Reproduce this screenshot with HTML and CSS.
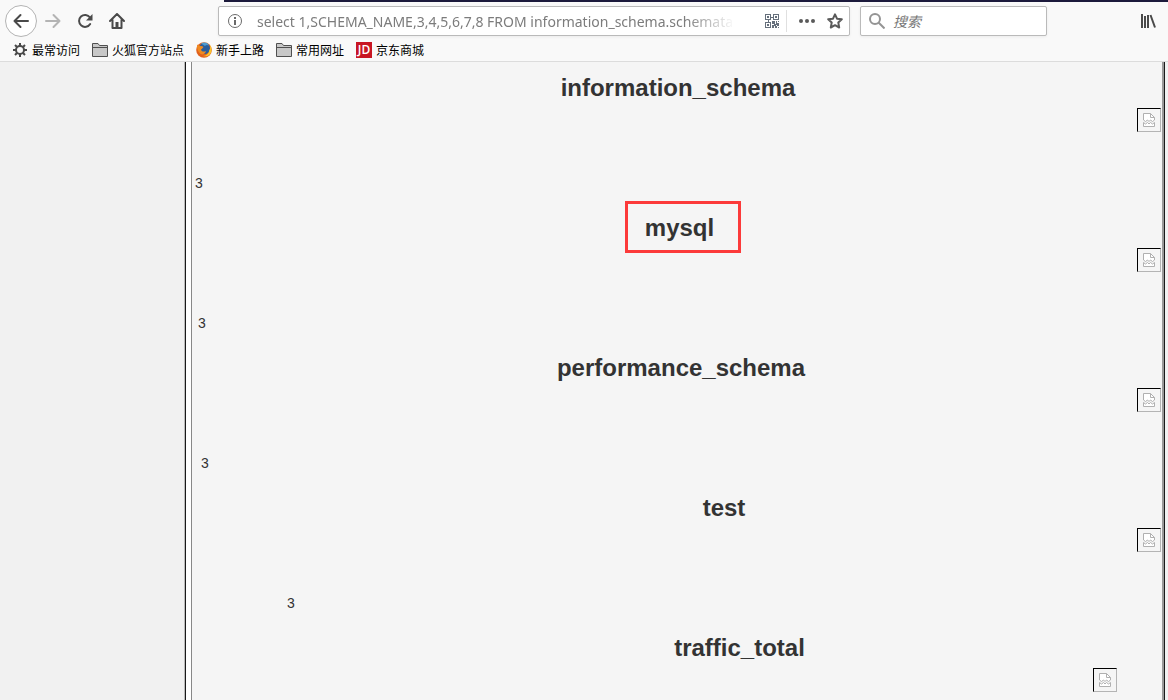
FILE: index.html
```html
<!DOCTYPE html>
<html lang="zh-CN">
<head>
    <meta charset="UTF-8">
    <meta name="viewport" content="width=device-width, initial-scale=1.0">
    <title>information_schema</title>
    <link rel="stylesheet" href="styles.css">
</head>
<body>
    <!-- Shared icons -->
    <svg class="symbols" aria-hidden="true">
        <symbol id="folder" viewBox="0 0 16 14">
            <path d="M.5 13.500V.5H6l1.500 2h8v11z" fill="#c8c8c8" stroke="#505050"/>
            <path d="M1 4.500h14" stroke="#505050"/>
        </symbol>
        <symbol id="broken" viewBox="0 0 14 16">
            <path d="M1.500 8V1.500h7l4 4V8l-2 1.500L8.500 8 7 9.500 5.500 8l-2 1.500zM1.500 10.500l2 1.500 2-1.500L7 12l1.500-1.500 2 1.500 2-1.500v4h-11z" fill="#fff" stroke="#b0b0b0"/>
            <path d="M8.500 1.500v4h4" fill="none" stroke="#b0b0b0"/>
        </symbol>
    </svg>

    <!-- Browser toolbar -->
    <header class="browser">
        <div class="tab-line"></div>
        <div class="toolbar">
            <div class="nav-buttons">
                <button class="back" aria-label="后退">
                    <svg width="16" height="16" viewBox="0 0 16 16"><path d="M15 8H1.500M7.500 2l-6 6 6 6" fill="none" stroke="#4a4a4a" stroke-width="2" stroke-linecap="round" stroke-linejoin="round"/></svg>
                </button>
                <button aria-label="前进" disabled>
                    <svg width="16" height="16" viewBox="0 0 16 16"><path d="M1 8h13.500M8.500 2l6 6-6 6" fill="none" stroke="#b4b4b4" stroke-width="2" stroke-linecap="round" stroke-linejoin="round"/></svg>
                </button>
                <button aria-label="刷新">
                    <svg width="16" height="16" viewBox="0 0 16 16"><path d="M13 4.500A6 6 0 1 0 13.200 11" fill="none" stroke="#4a4a4a" stroke-width="2" stroke-linecap="round"/><path d="M15.500 1v6.500H9z" fill="#4a4a4a"/></svg>
                </button>
                <button aria-label="主页">
                    <svg width="16" height="16" viewBox="0 0 16 16"><path d="M1 8l7-7 7 7M3.500 7v8h9V7" fill="none" stroke="#4a4a4a" stroke-width="2" stroke-linecap="round" stroke-linejoin="round"/><path d="M6.500 15V9h3v6z" fill="#4a4a4a"/></svg>
                </button>
            </div>
            <div class="url-bar">
                <svg width="16" height="16" viewBox="0 0 16 16"><circle cx="8" cy="8" r="6.500" fill="none" stroke="#6a6a6a"/><path d="M7 7h2v5H7zM7 4h2v2H7z" fill="#6a6a6a"/></svg>
                <input class="url" type="text" aria-label="地址" value="select 1,SCHEMA_NAME,3,4,5,6,7,8 FROM information_schema.schemata">
                <button class="qr" aria-label="二维码">
                    <svg width="14" height="14" viewBox="0 0 14 14" fill="#66707c"><path d="M0 0h6v6H0zM1 1v4h4V1zM8 0h6v6H8zM9 1v4h4V1zM0 8h6v6H0zM1 9v4h4V9z" fill-rule="evenodd"/><path d="M2 2h2v2H2zM10 2h2v2h-2zM2 10h2v2H2zM7 7h3v3H7zM11 7h1v2h2v2h-3zM13 7h1v1h-1zM9 10h2v2H9zM7 11h2v3H7zM10 12h2v2h-2zM12 11h2v1h-2zM13 13h1v1h-1zM6 3h2v1H6zM3 6h1v2H3z"/></svg>
                </button>
                <button class="dots" aria-label="更多">
                    <svg width="16" height="16" viewBox="0 0 16 16" fill="#5a5a5a"><circle cx="2" cy="8" r="2"/><circle cx="8" cy="8" r="2"/><circle cx="14" cy="8" r="2"/></svg>
                </button>
                <button aria-label="收藏">
                    <svg width="16" height="16" viewBox="0 0 16 16"><path d="M8 1.300l2 4.400 4.800.6-3.500 3.300.9 4.900L8 12.200l-4.200 2.300.9-4.900L1.200 6.300 6 5.700z" fill="none" stroke="#5a5a5a" stroke-width="2" stroke-linejoin="round"/></svg>
                </button>
            </div>
            <div class="search-bar">
                <svg width="16" height="16" viewBox="0 0 16 16" fill="none" stroke="#949494" stroke-width="2"><circle cx="6" cy="6" r="5"/><path d="M9.500 9.500l6 6"/></svg>
                <input type="text" aria-label="搜索" placeholder="搜索">
            </div>
            <button class="library" aria-label="书库">
                <svg width="16" height="16" viewBox="0 0 16 16" stroke="#4a4a4a" stroke-width="2"><path d="M2 1v14M5 3v12M8 2v13M10.500 2l4.500 12.500"/></svg>
            </button>
        </div>
        <nav class="bookmarks">
            <a href="#">
                <svg width="16" height="16" viewBox="0 0 16 16" fill="none" stroke="#4a4a4a"><circle cx="8" cy="8" r="4" stroke-width="2"/><path d="M8 1v3M8 12v3M1 8h3M12 8h3M3 3l2 2M11 11l2 2M3 13l2-2M11 5l2-2" stroke-width="2"/></svg>
                最常访问
            </a>
            <a href="#"><svg width="16" height="14"><use href="#folder"/></svg>火狐官方站点</a>
            <a href="#">
                <svg width="16" height="16" viewBox="0 0 16 16"><circle cx="8" cy="8" r="7.800" fill="#e2611c"/><circle cx="8.500" cy="6.500" r="5.500" fill="#2a5d9c"/><path d="M5 1.500C8-.3 12 .5 13 3.500c-2-1-3-.5-4 .5z" fill="#4d9bd0"/><path d="M1 3c1-.5 2 .2 3 1.200 1.500-.4 2.500 0 3.500.8C6.500 6 6 7 5 7.500c.5 2.500 3.500 2.500 5 1.500-.5 2-1.500 3-3.500 3.500C3.500 12 1 9 1 3z" fill="#f08a20"/><path d="M14 3c2.500 4 2 8-1.500 10.500-2 1-4 1-5.500.5 4-.5 6.500-3 6.200-7 .5.500.8 1 .8 1.500C14 7 14.200 5 14 3z" fill="#fbc52c"/></svg>
                新手上路
            </a>
            <a href="#"><svg width="16" height="14"><use href="#folder"/></svg>常用网址</a>
            <a href="#"><span class="jd">JD</span>京东商城</a>
        </nav>
    </header>

    <!-- Page content -->
    <main class="page">
        <div class="frame">
            <div class="content">
                <section class="entry">
                    <h2>information_schema</h2>
                    <div class="picture"><svg width="14" height="16"><use href="#broken"/></svg></div>
                    <p>3</p>
                </section>
                <section class="entry level-1">
                    <h2><span class="marked">mysql</span></h2>
                    <div class="picture"><svg width="14" height="16"><use href="#broken"/></svg></div>
                    <p>3</p>
                </section>
                <section class="entry level-2">
                    <h2>performance_schema</h2>
                    <div class="picture"><svg width="14" height="16"><use href="#broken"/></svg></div>
                    <p>3</p>
                </section>
                <section class="entry level-3">
                    <h2>test</h2>
                    <div class="picture"><svg width="14" height="16"><use href="#broken"/></svg></div>
                    <p>3</p>
                </section>
                <section class="entry level-4">
                    <h2>traffic_total</h2>
                    <div class="picture"><svg width="14" height="16"><use href="#broken"/></svg></div>
                </section>
            </div>
        </div>
    </main>
</body>
</html>
```
FILE: styles.css
```css
/* General Styles */
* {
    box-sizing: border-box;
}

body {
    margin: 0;
    height: 100vh;
    display: flex;
    flex-direction: column;
    overflow: hidden;
    font-family: "Liberation Sans", Arial, "Noto Sans CJK SC", sans-serif;
    color: #333;
    background-color: #f1f1f1;
}

svg {
    display: block;
    flex-shrink: 0;
}

.symbols {
    position: absolute;
    width: 0;
    height: 0;
}

button {
    display: flex;
    align-items: center;
    justify-content: center;
    padding: 0;
    border: none;
    background: none;
}

input {
    min-width: 0;
    padding: 0;
    border: none;
    outline: none;
    background: none;
}

/* Browser Toolbar */
.browser {
    flex-shrink: 0;
    background-color: #f9f9f9;
    border-bottom: 1px solid #dcdcdc;
}

.tab-line {
    height: 2px;
    margin-left: 224px;
    background-color: #1c1a3c;
}

.toolbar {
    display: flex;
    align-items: center;
    height: 38px;
    padding: 0 12px 0 5px;
}

.nav-buttons {
    display: flex;
    width: 213px;
}

.nav-buttons button {
    width: 32px;
    height: 32px;
}

.nav-buttons .back {
    border: 1px solid #b4b4b4;
    border-radius: 50%;
    background-color: #fff;
}

.url-bar,
.search-bar {
    display: flex;
    align-items: center;
    height: 30px;
    padding: 0 6px 0 8px;
    background-color: #fff;
    border: 1px solid #bababa;
    border-radius: 2px;
    box-shadow: 0 1px 3px rgba(0, 0, 0, 0.06);
}

.url-bar {
    flex: 1;
    margin-right: 10px;
}

.url {
    flex: 1;
    margin: 0 30px 0 14px;
    font-family: "Noto Sans", "Open Sans", sans-serif;
    font-size: 14px;
    color: #7c7c7c;
    -webkit-mask-image: linear-gradient(to left, transparent, #000 50px);
    mask-image: linear-gradient(to left, transparent, #000 50px);
}

.qr {
    height: 22px;
    padding-right: 7px;
    border-right: 1px solid #e0e0e0;
}

.dots {
    margin: 0 12px;
}

.search-bar {
    width: 187px;
    margin-right: 93px;
}

.search-bar input {
    flex: 1;
    margin-left: 8px;
    font-family: "Noto Sans CJK SC", sans-serif;
    font-size: 14px;
    font-style: italic;
}

.search-bar input::placeholder {
    color: #777;
}

/* Bookmarks */
.bookmarks {
    display: flex;
    gap: 12px;
    height: 21px;
    padding: 0 12px;
}

.bookmarks a {
    display: flex;
    align-items: center;
    gap: 4px;
    height: 20px;
    font-family: "Noto Sans CJK SC", sans-serif;
    font-size: 12px;
    line-height: 20px;
    color: #000;
    text-decoration: none;
}

.jd {
    width: 16px;
    height: 16px;
    font-family: "Open Sans", sans-serif;
    font-size: 12px;
    font-weight: 600;
    line-height: 16px;
    text-align: center;
    color: #fff;
    background-color: #c81623;
}

/* Page Content */
.page {
    flex: 1;
    min-height: 0;
    padding: 0 3px 0 184px;
}

.frame {
    height: 100%;
    padding-left: 4px;
    background-color: #fff;
    border-right: 1px solid #1a1a1a;
    border-left: 1px solid #1a1a1a;
    margin-left: 1px;
    outline: 1px solid #bbb;
    outline-offset: 0;
    clip-path: inset(0 0 0 -1px);
}

.content {
    height: 100%;
    padding: 0 1px 0 4px;
    overflow: hidden;
    background-color: #f5f5f5;
    border-left: 1px solid #888;
    border-right: 2px solid #999;
}

.frame .content {
    margin-left: 1px;
    padding-left: 3px;
}

.entry {
    height: 140px;
    padding-top: 12px;
}

.entry h2 {
    margin: 0;
    font-size: 24px;
    line-height: 28px;
    text-align: center;
}

.entry p {
    margin: 41px 0 0;
    font-size: 14px;
    line-height: 20px;
}

.picture {
    display: flex;
    align-items: center;
    justify-content: center;
    width: 24px;
    height: 24px;
    margin: 6px 0 0 auto;
    border: 1px solid #b4b4b4;
    border-top-color: #000;
    border-left-color: #000;
}

.level-1 {
    padding-left: 3px;
}

.level-2 {
    padding-left: 6px;
}

.level-3 {
    padding-left: 92px;
}

.level-4 {
    padding-left: 167px;
    padding-right: 44px;
}

/* Highlighted schema name */
.marked {
    position: relative;
}

.marked::after {
    content: "";
    position: absolute;
    top: -13px;
    right: -27px;
    bottom: -12px;
    left: -20px;
    border: 3px solid #fc3a3a;
}
```
